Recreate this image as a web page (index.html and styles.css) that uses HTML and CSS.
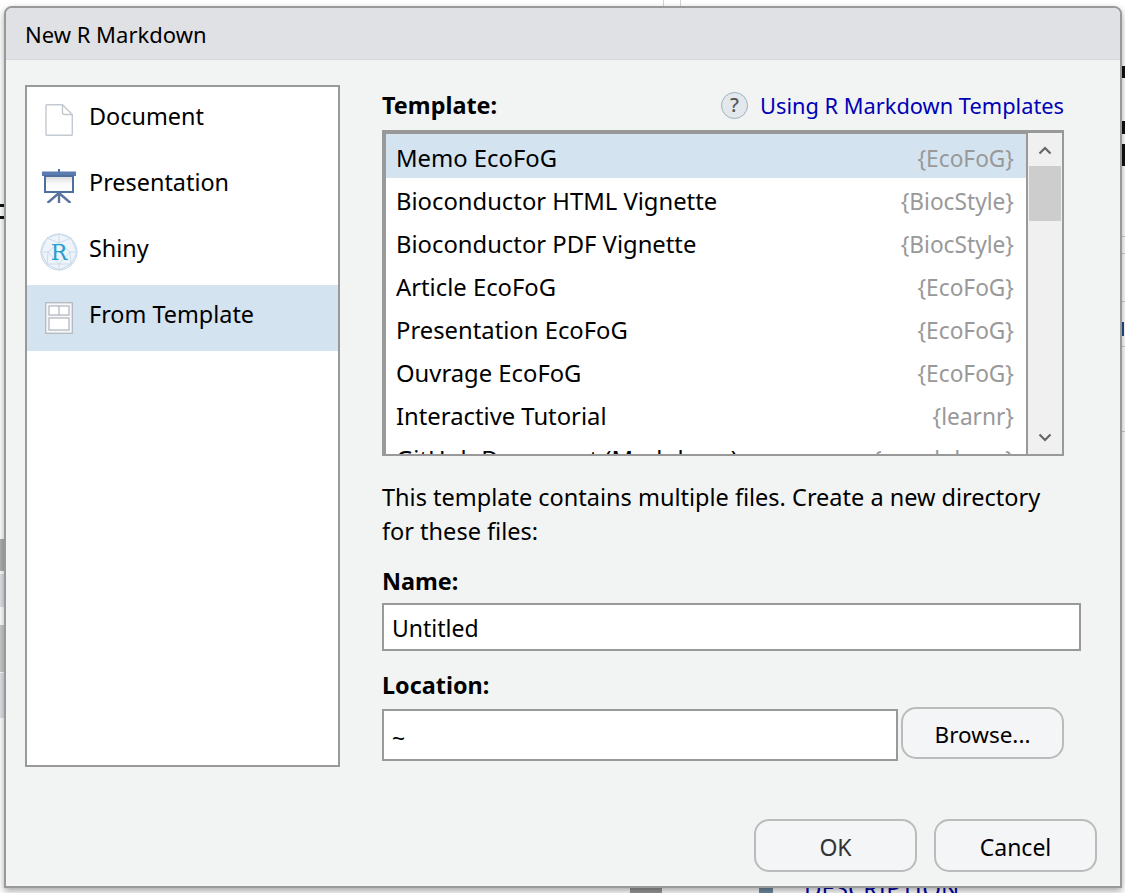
FILE: index.html
```html
<!DOCTYPE html>
<html lang="en">
<head>
<meta charset="UTF-8">
<title>New R Markdown</title>
<link rel="stylesheet" href="styles.css">
</head>
<body>

<div class="backdrop">
  <div class="bd-line bd-top-a"></div>
  <div class="bd-line bd-top-b"></div>
  <div class="bd-band bd-left-a"></div>
  <div class="bd-band bd-left-b"></div>
  <div class="bd-band bd-left-c"></div>
  <div class="bd-band bd-left-d"></div>
  <div class="bd-mark bd-mark-a"></div>
  <div class="bd-mark bd-mark-b"></div>
  <div class="bd-mark bd-mark-c"></div>
  <div class="bd-mark bd-mark-d"></div>
  <div class="bd-mark bd-mark-e"></div>
  <div class="bd-mark bd-mark-f"></div>
  <div class="bd-rule bd-rule-a"></div>
  <div class="bd-rule bd-rule-b"></div>
  <div class="bd-rule bd-rule-c"></div>
  <div class="bd-rule bd-rule-d"></div>
  <div class="bd-rule bd-rule-e"></div>
  <div class="bd-foot-dark"></div>
  <div class="bd-foot-icon"></div>
  <div class="bd-bottom-link">DESCRIPTION</div>
</div>

<div class="dialog">
  <div class="titlebar">New R Markdown</div>
  <div class="dialog-body">
    <ul class="type-list">
      <li class="type-item">
        <span class="type-icon">
          <svg width="28" height="32" viewBox="0 0 28 32">
            <path d="M1 1.500Q1 .7 1.800 .7H17.500L27.300 10.500V30.500Q27.300 31.300 26.500 31.300H1.800Q1 31.300 1 30.500Z" fill="#fff" stroke="#c3c9d0" stroke-width="1.400"/>
            <path d="M17.500 1V8.500Q17.500 10.500 19.500 10.500H27" fill="none" stroke="#c3c9d0" stroke-width="1.400"/>
          </svg>
        </span>
        <span class="type-name">Document</span>
      </li>
      <li class="type-item">
        <span class="type-icon">
          <svg width="34" height="34" viewBox="0 0 34 34">
            <defs>
              <linearGradient id="board" x1="0" y1="0" x2="0" y2="1">
                <stop offset="0" stop-color="#d8d8d8"/>
                <stop offset="0.5" stop-color="#fbfbfb"/>
              </linearGradient>
            </defs>
            <path d="M17 0V3" stroke="#4f6f9f" stroke-width="2"/>
            <rect x="0" y="2.500" width="34" height="4.500" fill="#5a7cb0"/>
            <rect x="3" y="7" width="28" height="16" fill="url(#board)" stroke="#4f6f9f" stroke-width="2"/>
            <path d="M17 23V34M17 24L5.500 34M17 24L28.500 34" stroke="#5a74a0" stroke-width="2.400" fill="none"/>
          </svg>
        </span>
        <span class="type-name">Presentation</span>
      </li>
      <li class="type-item">
        <span class="type-icon">
          <svg width="38" height="38" viewBox="0 0 38 38">
            <circle cx="19" cy="19" r="18" fill="#eef4fa" stroke="#c3d6e8" stroke-width="1"/>
            <path d="M19 1L7 5L1 19L7 31L19 37L31 31L37 19L31 5ZM7 5L19 10L31 5M19 10L8 19L7 31M19 10L30 19L31 31M8 19L19 31L30 19M1 19L8 19M30 19L37 19M19 31V37M7 31L19 31L31 31M19 1V10" fill="none" stroke="#c6d8ea" stroke-width="0.900"/>
            <text x="19" y="27" class="r-glyph" text-anchor="middle">R</text>
          </svg>
        </span>
        <span class="type-name">Shiny</span>
      </li>
      <li class="type-item is-selected">
        <span class="type-icon">
          <svg width="28" height="32" viewBox="0 0 28 32">
            <rect x="0.700" y="0.700" width="26.600" height="30.600" fill="#f6f7f8" stroke="#b4b9c0" stroke-width="1.300"/>
            <rect x="4" y="4" width="20" height="9" fill="#fff" stroke="#b4b9c0" stroke-width="1.300"/>
            <path d="M14 4V13" stroke="#b4b9c0" stroke-width="1.300"/>
            <rect x="4" y="16" width="20" height="12" fill="#fff" stroke="#b4b9c0" stroke-width="1.300"/>
          </svg>
        </span>
        <span class="type-name">From Template</span>
      </li>
    </ul>

    <div class="main-col">
      <div class="template-head">
        <span class="field-label">Template:</span>
        <span class="help-link">
          <span class="help-icon">?</span>
          <a class="link" href="#">Using R Markdown Templates</a>
        </span>
      </div>

      <div class="template-box">
        <ul class="template-list">
          <li class="template-row is-selected"><span>Memo EcoFoG</span><span class="pkg">{EcoFoG}</span></li>
          <li class="template-row"><span>Bioconductor HTML Vignette</span><span class="pkg">{BiocStyle}</span></li>
          <li class="template-row"><span>Bioconductor PDF Vignette</span><span class="pkg">{BiocStyle}</span></li>
          <li class="template-row"><span>Article EcoFoG</span><span class="pkg">{EcoFoG}</span></li>
          <li class="template-row"><span>Presentation EcoFoG</span><span class="pkg">{EcoFoG}</span></li>
          <li class="template-row"><span>Ouvrage EcoFoG</span><span class="pkg">{EcoFoG}</span></li>
          <li class="template-row"><span>Interactive Tutorial</span><span class="pkg">{learnr}</span></li>
          <li class="template-row"><span>GitHub Document (Markdown)</span><span class="pkg">{rmarkdown}</span></li>
        </ul>
        <div class="scrollbar">
          <svg class="arrow" width="14" height="9" viewBox="0 0 14 9"><path d="M1.500 7.500L7 2L12.500 7.500" fill="none" stroke="#666" stroke-width="2.200"/></svg>
          <div class="thumb"></div>
          <div class="track"></div>
          <svg class="arrow" width="14" height="9" viewBox="0 0 14 9"><path d="M1.500 1.500L7 7L12.500 1.500" fill="none" stroke="#666" stroke-width="2.200"/></svg>
        </div>
      </div>

      <p class="note">This template contains multiple files. Create a new directory for these files:</p>

      <div class="field-label name-label">Name:</div>
      <div class="text-input name-input">Untitled</div>

      <div class="field-label location-label">Location:</div>
      <div class="location-row">
        <div class="text-input location-input">~</div>
        <button class="btn browse-btn">Browse...</button>
      </div>
    </div>
  </div>

  <div class="dialog-foot">
    <button class="btn foot-btn ok-btn">OK</button>
    <button class="btn foot-btn">Cancel</button>
  </div>
</div>

</body>
</html>
```

FILE: styles.css
```css
* {
  box-sizing: border-box;
}

html, body {
  margin: 0;
  padding: 0;
  height: 893px;
  overflow: hidden;
}

body {
  font-family: "Noto Sans", "Open Sans", sans-serif;
  font-size: 24px;
  color: #000;
  background-color: #fff;
  padding: 6px 0 0 4px;
}

/* bits of the main window that peek out behind the dialog */
.backdrop {
  position: absolute;
  inset: 0;
  overflow: hidden;
}

.bd-line {
  position: absolute;
  top: 0;
  width: 1px;
  height: 7px;
  background-color: #d5d5d5;
}

.bd-top-a { left: 663px; }
.bd-top-b { left: 680px; }

.bd-band {
  position: absolute;
  left: 0;
  width: 5px;
}

.bd-left-a { top: 539px; height: 32px; background-color: #b0b0b0; }
.bd-left-b { top: 574px; height: 33px; background-color: #dde3e6; }
.bd-left-c { top: 625px; height: 47px; background-color: #c8cbcd; }
.bd-left-d { top: 673px; height: 45px; background-color: #dde3e6; }

.bd-mark {
  position: absolute;
  background-color: #111;
}

.bd-mark-a { left: 0; top: 204px; width: 4px; height: 3px; }
.bd-mark-b { left: 0; top: 216px; width: 4px; height: 3px; }
.bd-mark-c { left: 1122px; top: 66px; width: 3px; height: 12px; }
.bd-mark-d { left: 1122px; top: 121px; width: 3px; height: 13px; }
.bd-mark-e { left: 1122px; top: 144px; width: 3px; height: 22px; }
.bd-mark-f { left: 1122px; top: 322px; width: 2px; height: 14px; background-color: #1d4f80; }

.bd-rule {
  position: absolute;
  left: 1122px;
  width: 3px;
  height: 1px;
  background-color: #ccc;
}

.bd-rule-a { top: 236px; }
.bd-rule-b { top: 253px; }
.bd-rule-c { top: 301px; }
.bd-rule-d { top: 346px; }
.bd-rule-e { top: 431px; }

.bd-foot-dark {
  position: absolute;
  left: 630px;
  top: 886px;
  width: 32px;
  height: 7px;
  background-color: #999;
}

.bd-foot-icon {
  position: absolute;
  left: 759px;
  top: 886px;
  width: 14px;
  height: 7px;
  background-color: #6f8b9f;
}

.bd-bottom-link {
  position: absolute;
  left: 804px;
  top: 873px;
  font-size: 24px;
  line-height: 30px;
  color: #00a;
}

.dialog {
  position: relative;
  width: 1118px;
  height: 882px;
  background-color: #f2f4f4;
  border: 2px solid #999;
  border-radius: 8px 8px 0 0;
  box-shadow: 0 3px 7px rgba(0, 0, 0, 0.35);
  display: flex;
  flex-direction: column;
  overflow: hidden;
}

.titlebar {
  height: 52px;
  padding: 11px 0 0 19px;
  font-size: 22px;
  line-height: 30px;
  background-color: #e0e1e5;
  border-bottom: 1px solid #d6d7da;
}

.dialog-body {
  display: flex;
  padding: 25px 0 0 19px;
  height: 759px;
}

.type-list {
  list-style: none;
  margin: 0;
  padding: 0;
  width: 315px;
  height: 682px;
  background-color: #fff;
  border: 2px solid #999;
}

.type-item {
  display: flex;
  align-items: center;
  height: 66px;
  font-size: 23.4px;
}

.type-item.is-selected {
  background-color: #d4e3f0;
}

.type-icon {
  width: 62px;
  display: flex;
  justify-content: center;
  padding-left: 2px;
}

.type-name {
  margin-top: -8px;
}

.main-col {
  margin-left: 42px;
  width: 700px;
}

.template-head {
  display: flex;
  justify-content: space-between;
  align-items: flex-start;
  width: 682px;
  height: 45px;
  padding-top: 5px;
}

.field-label {
  font-weight: 700;
  font-size: 23.4px;
  line-height: 30px;
}

.help-link {
  display: flex;
  align-items: center;
  gap: 12px;
  height: 30px;
}

.help-icon {
  width: 27px;
  height: 27px;
  border: 1px solid #9fb0bd;
  border-radius: 50%;
  background-color: #e2e8ec;
  color: #555;
  font-size: 20px;
  font-weight: 500;
  line-height: 24px;
  text-align: center;
}

.link {
  color: #0000b4;
  text-decoration: none;
  font-size: 21.8px;
}

.template-box {
  display: flex;
  width: 682px;
  height: 326px;
  background-color: #fff;
  border: 2px solid #999;
  border-top-width: 3px;
}

.template-list {
  list-style: none;
  margin: 0;
  padding: 0;
  flex: 1;
  height: 321px;
  overflow: hidden;
  border-top: 1px solid #999;
  border-left: 2px solid #999;
  border-right: 2px solid #999;
}

.template-row {
  display: flex;
  justify-content: space-between;
  align-items: center;
  height: 43px;
  padding: 5px 12px 0 10px;
  font-size: 23.8px;
}

.template-row.is-selected {
  height: 44px;
  margin-bottom: -1px;
  padding-top: 4px;
  background-color: #d4e3f0;
}

.pkg {
  color: #999;
  font-size: 22.7px;
}

.scrollbar {
  width: 34px;
  background-color: #f0f0f0;
  display: flex;
  flex-direction: column;
  align-items: center;
  padding: 13px 0 12px;
}

.thumb {
  width: 32px;
  height: 55px;
  margin-top: 11px;
  background-color: #cdcdcd;
}

.track {
  flex: 1;
}

.note {
  margin: 24px 0 0;
  width: 682px;
  font-size: 23.5px;
  line-height: 34px;
}

.name-label {
  margin-top: 18px;
}

.text-input {
  background-color: #fff;
  border: 2px solid #999;
  font-size: 23px;
  padding-left: 8px;
}

.name-input {
  margin-top: 7px;
  width: 699px;
  height: 48px;
  line-height: 47px;
}

.location-label {
  margin-top: 19px;
}

.location-row {
  display: flex;
  gap: 3px;
  margin-top: 7px;
}

.location-input {
  width: 516px;
  height: 52px;
  margin-top: 2px;
  line-height: 54px;
}

.btn {
  font-family: inherit;
  font-size: 22.5px;
  color: #000;
  background-color: #f4f5f6;
  border: 2px solid #bbb;
  border-radius: 15px;
  padding: 2px 0 0;
}

.browse-btn {
  width: 163px;
  height: 52px;
}

.dialog-foot {
  display: flex;
  justify-content: flex-end;
  gap: 17px;
  padding: 0 23px 0 0;
}

.foot-btn {
  width: 163px;
  height: 53px;
  font-size: 23px;
}

.ok-btn {
  color: #333;
}

.r-glyph {
  font-family: "DejaVu Serif", serif;
  font-size: 22px;
  fill: #2a9fd0;
}
```
